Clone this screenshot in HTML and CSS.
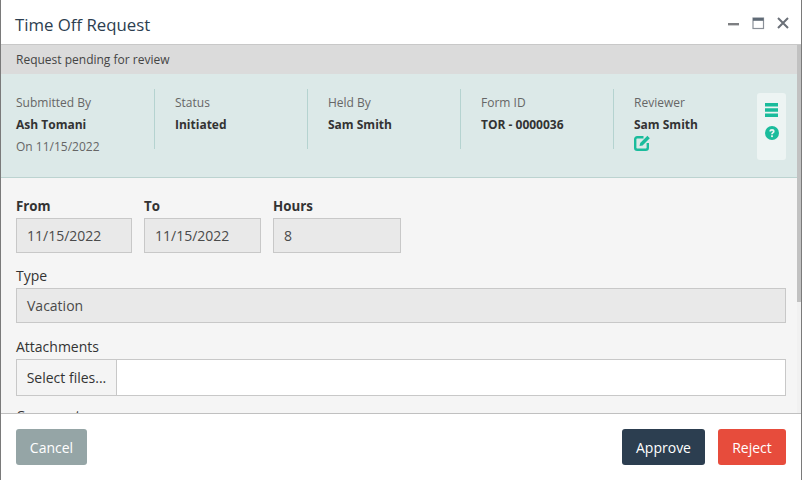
FILE: index.html
```html
<!DOCTYPE html>
<html lang="en">
<head>
<meta charset="utf-8">
<title>Time Off Request</title>
<link rel="stylesheet" href="styles.css">
</head>
<body>
<div class="window">
  <header class="titlebar">
    <h1 class="title">Time Off Request</h1>
    <div class="winctl">
      <svg class="ctl" width="12" height="12" viewBox="0 0 12 12"><rect x="0" y="6" width="11" height="2.4" fill="#7d7f82"/></svg>
      <svg class="ctl" width="13" height="13" viewBox="0 0 13 13"><rect x="1" y="1" width="10.5" height="10.5" fill="none" stroke="#8a9098" stroke-width="1.2"/><rect x="1" y="1" width="10.5" height="2.8" fill="#5f6a76"/></svg>
      <svg class="ctl" width="12" height="12" viewBox="0 0 12 12"><path d="M1 1l10 10M11 1L1 11" stroke="#6b7078" stroke-width="2" fill="none"/></svg>
    </div>
  </header>
  <div class="body">
    <div class="scrollarea">
      <div class="notice">Request pending for review</div>
      <section class="info">
        <div class="col col-first">
          <div class="lbl">Submitted By</div>
          <div class="val">Ash Tomani</div>
          <div class="lbl sub">On 11/15/2022</div>
        </div>
        <div class="col">
          <div class="lbl">Status</div>
          <div class="val">Initiated</div>
        </div>
        <div class="col">
          <div class="lbl">Held By</div>
          <div class="val">Sam Smith</div>
        </div>
        <div class="col">
          <div class="lbl">Form ID</div>
          <div class="val">TOR - 0000036</div>
        </div>
        <div class="col col-last">
          <div class="lbl">Reviewer</div>
          <div class="val">Sam Smith</div>
          <svg class="edit" width="17" height="16" viewBox="0 0 17 16"><path d="M9.5 2.2H3.2A2 2 0 0 0 1.2 4.2v8.6a2 2 0 0 0 2 2h8.6a2 2 0 0 0 2-2V8" fill="none" stroke="#1abc9c" stroke-width="2.4"/><path d="M5.5 11l.7-3L13.4.8l2.4 2.4L8.6 10.4z" fill="#1abc9c"/></svg>
        </div>
        <div class="tools">
          <svg width="13" height="14" viewBox="0 0 13 14"><path d="M0 0h13v3.4H0zM0 5.3h13v3.4H0zM0 10.6h13V14H0z" fill="#1abc9c"/></svg>
          <svg width="14" height="14" viewBox="0 0 14 14"><circle cx="7" cy="7" r="7" fill="#1abc9c"/><path d="M4.4 5.4a2.6 2.4 0 0 1 5.2 0c0 1.6-1.7 1.6-1.7 2.9H6.1c0-2 1.7-1.9 1.7-2.9a.8.7 0 0 0-1.6 0z" fill="#edf4f3"/><rect x="6.1" y="9.3" width="1.8" height="1.8" fill="#edf4f3"/></svg>
        </div>
      </section>
      <form class="form">
        <div class="row">
          <div class="field f-from"><label class="flabel strong">From</label><div class="input off">11/15/2022</div></div>
          <div class="field f-to"><label class="flabel strong">To</label><div class="input off">11/15/2022</div></div>
          <div class="field f-hours"><label class="flabel strong">Hours</label><div class="input off">8</div></div>
        </div>
        <div class="field"><label class="flabel">Type</label><div class="input off">Vacation</div></div>
        <div class="field"><label class="flabel">Attachments</label>
          <div class="upload"><span class="pick">Select files...</span></div>
        </div>
        <div class="field"><label class="flabel">Comments</label></div>
      </form>
    </div>
    <div class="scrollbar"><div class="thumb"></div></div>
  </div>
  <footer class="footer">
    <button class="btn cancel" type="button">Cancel</button>
    <div class="actions">
      <button class="btn approve" type="button">Approve</button>
      <button class="btn reject" type="button">Reject</button>
    </div>
  </footer>
</div>
</body>
</html>
```

FILE: styles.css
```css
* { box-sizing: border-box; }
html, body { margin: 0; height: 100%; overflow: hidden; }
body { font-family: "Open Sans", sans-serif; color: #333; background: #fff; }
.window { width: 802px; height: 480px; display: flex; flex-direction: column; border-left: 1px solid #7a7a7a; border-right: 1px solid #7a7a7a; background: #fff; }
.titlebar { height: 45px; flex: none; display: flex; align-items: center; justify-content: space-between; padding: 2px 12px 0 14px; border-bottom: 1px solid #c8c8c8; }
.title { margin: 2px 0 0; font-size: 16.8px; font-weight: 400; color: #2c3e50; }
.winctl { display: flex; align-items: center; gap: 12px; }
.ctl { display: block; }
.body { flex: 1; min-height: 0; display: flex; overflow: hidden; }
.scrollarea { flex: 1; min-width: 0; overflow: hidden; }
.scrollbar { width: 4px; flex: none; background: #f1f1f1; }
.thumb { height: 257px; background: #c1c1c1; }
.notice { height: 29px; display: flex; align-items: center; padding-left: 15px; background: #dbdbdb; font-size: 12px; color: #444; }
.info { height: 104px; display: flex; align-items: flex-start; padding: 15px 0 0 15px; background: #dce9e8; border-bottom: 1px solid #bcd3d0; }
.col { width: 153px; height: 60px; padding-left: 20px; border-left: 1px solid #b5d3d0; font-size: 12px; }
.col-first { width: 138px; padding-left: 0; border-left: 0; }
.col-last { width: 144px; }
.lbl { font-size: 12px; line-height: 18px; margin-top: 5px; color: #666; }
.val { font-size: 12px; line-height: 18px; margin-top: 4px; font-weight: 700; color: #333; }
.sub { margin-top: 4px; }
.edit { display: block; margin-top: 1px; }
.tools { margin-top: 4px; width: 29px; height: 67px; border-radius: 3px; background: #edf4f3; display: flex; flex-direction: column; align-items: center; gap: 9px; padding-top: 10px; }
.form { padding: 19px 11px 0 15px; background: #f5f5f5; height: 300px; }
.row { display: flex; gap: 12px; margin-bottom: 14px; }
.field { margin-bottom: 15px; }
.row .field { margin-bottom: 0; }
.f-from { width: 116px; }
.f-to { width: 117px; }
.f-hours { width: 128px; }
.flabel { display: block; font-size: 14px; line-height: 18px; margin-bottom: 3px; color: #333; }
.strong { font-size: 13.3px; font-weight: 700; }
.input { height: 35px; display: flex; align-items: center; padding-left: 10px; border: 1px solid #c8c8c8; font-size: 14px; color: #4a4a4a; }
.off { background: #e9e9e9; }
.upload { height: 37px; display: flex; background: #fff; border: 1px solid #c8c8c8; margin-bottom: -4px; }
.pick { width: 100px; display: flex; align-items: center; justify-content: center; background: #f4f4f4; border-right: 1px solid #c8c8c8; font-size: 14px; color: #333; }
.footer { height: 67px; flex: none; display: flex; justify-content: space-between; align-items: flex-start; padding: 15px 15px 0; background: #fff; border-top: 1px solid #c0c0c0; }
.actions { display: flex; gap: 13px; }
.btn { height: 36px; border: 0; border-radius: 3px; font-family: inherit; font-size: 14px; color: #fff; padding: 0; }
.cancel { width: 71px; background: #95a5a6; }
.approve { width: 83px; background: #2c3e50; }
.reject { width: 68px; background: #e74c3c; }
```
